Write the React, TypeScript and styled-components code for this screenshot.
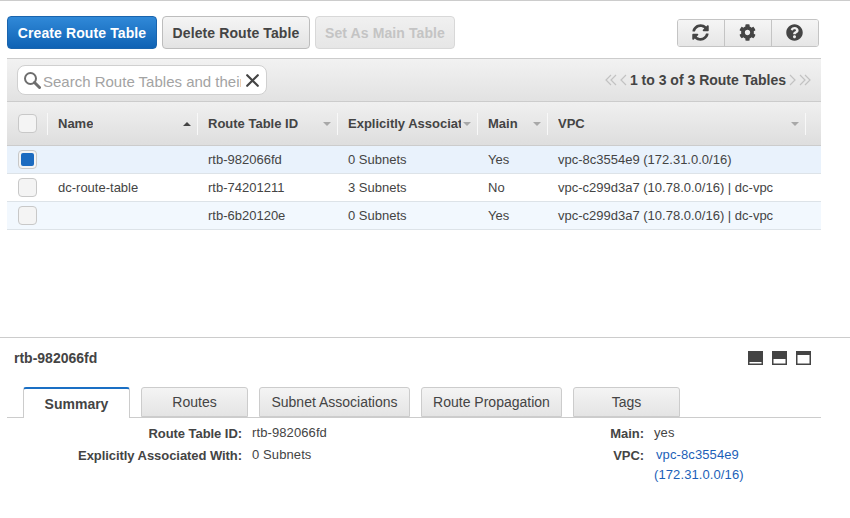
import React, { ReactElement } from "react";
import styled, { createGlobalStyle } from "styled-components";
import { FaCog, FaQuestionCircle, FaSyncAlt } from "react-icons/fa";

const GlobalStyle = createGlobalStyle`
  html, body {
    margin: 0;
    padding: 0;
    background: #fff;
  }
  body {
    font-family: "Liberation Sans", Arial, sans-serif;
    color: #444;
  }
`;

const COLUMNS = "40px 150px 140px 140px 70px 258px 16px";

const PageStyled = styled.div`
  width: 850px;
  height: 518px;
  overflow: hidden;
  border-top: 1px solid #ccc;
  box-sizing: border-box;
`;

const ListPaneStyled = styled.section`
  height: 336px;
  padding: 15px 29px 0 7px;
  box-sizing: border-box;
`;

const ActionBarStyled = styled.div`
  display: flex;
  align-items: center;
  gap: 5px;
  height: 33px;
  margin-bottom: 9px;
`;

const ActionButton = styled.button<{ $variant?: "primary" | "disabled" }>`
  height: 33px;
  padding: 0;
  width: ${(p) => (p.$variant === "primary" ? 150 : p.$variant === "disabled" ? 140 : 148)}px;
  border-radius: 4px;
  font: bold 14px "Liberation Sans", Arial, sans-serif;
  letter-spacing: 0.1px;
  border: 1px solid ${(p) => (p.$variant === "primary" ? "#1a64ad" : p.$variant === "disabled" ? "#d8d8d8" : "#bdbdbd")};
  color: ${(p) => (p.$variant === "primary" ? "#fff" : p.$variant === "disabled" ? "#c4c4c4" : "#444")};
  background: ${(p) =>
    p.$variant === "primary"
      ? "linear-gradient(#3089d8, #0f62b4)"
      : p.$variant === "disabled"
        ? "linear-gradient(#f0f0f0, #e6e6e6)"
        : "linear-gradient(#f5f5f5, #e3e3e3)"};
`;

const IconGroupStyled = styled.div`
  display: flex;
  width: 142px;
  margin-left: auto;
  margin-right: 2px;
  height: 28px;
  border: 1px solid #c4c4c4;
  border-radius: 3px;
  overflow: hidden;
  box-sizing: border-box;
`;

const IconButton = styled.button`
  flex: 1;
  padding: 0 2px 0 0;
  border: 0;
  border-left: 1px solid #c4c4c4;
  background: linear-gradient(#f5f5f5, #e6e6e6);
  color: #444;
  display: flex;
  align-items: center;
  justify-content: center;
  font-size: 17px;

  &:first-child {
    border-left: 0;
  }
`;

const ToolbarStyled = styled.div`
  display: flex;
  align-items: center;
  justify-content: space-between;
  height: 44px;
  padding: 0 10px;
  box-sizing: border-box;
  border-top: 1px solid #ccc;
  border-bottom: 1px solid #ccc;
  background: linear-gradient(#f2f2f2, #e2e2e2);
`;

const SearchBoxStyled = styled.div`
  display: flex;
  align-items: center;
  width: 250px;
  height: 30px;
  padding: 0 7px 0 5px;
  box-sizing: border-box;
  background: #fff;
  border: 1px solid #d0d0d0;
  border-radius: 8px;
`;

const SearchInput = styled.input`
  flex: 1;
  min-width: 0;
  margin: 0 5px 0 2px;
  padding: 2px 0 0;
  border: 0;
  outline: none;
  font: 15px "Liberation Sans", Arial, sans-serif;

  &::placeholder {
    color: #a3a3a3;
    opacity: 1;
  }
`;

const PagerStyled = styled.div`
  display: flex;
  align-items: center;
  gap: 3px;
  font-size: 14px;
  font-weight: bold;
  color: #444;
`;

const HeaderRowStyled = styled.div`
  display: grid;
  grid-template-columns: ${COLUMNS};
  align-items: center;
  height: 44px;
  border-bottom: 1px solid #ccc;
  background: linear-gradient(#f0f0f0, #dedede);
  box-sizing: border-box;
`;

const HeaderCell = styled.div`
  display: flex;
  align-items: center;
  justify-content: space-between;
  height: 22px;
  padding: 0 6px 0 10px;
  box-sizing: border-box;
  border-left: 1px solid #f8f8f8;
  font-size: 13px;
  font-weight: bold;
  color: #444;
  white-space: nowrap;
  overflow: hidden;
`;

const HeaderLabel = styled.span`
  overflow: hidden;
  flex: 0 1 auto;
`;

const Caret = styled.span<{ $up?: boolean }>`
  flex: none;
  width: 0;
  height: 0;
  margin-left: 2px;
  border-left: 4px solid transparent;
  border-right: 4px solid transparent;
  ${(p) => (p.$up ? "border-bottom: 4px solid #444;" : "border-top: 4px solid #a8a8a8;")}
`;

const CheckCell = styled.div`
  display: flex;
  align-items: center;
  padding-left: 11px;
`;

const CheckBox = styled.span<{ $checked?: boolean }>`
  display: flex;
  align-items: center;
  justify-content: center;
  width: 19px;
  height: 19px;
  box-sizing: border-box;
  border: 1px solid #c8c8c8;
  border-radius: 4px;
  background: #f4f4f4;

  &::after {
    content: "";
    display: ${(p) => (p.$checked ? "block" : "none")};
    width: 13px;
    height: 13px;
    border-radius: 2px;
    background: #1c6bc0;
  }
`;

const BodyRow = styled.div<{ $tint?: "selected" | "odd" }>`
  display: grid;
  grid-template-columns: ${COLUMNS};
  align-items: center;
  height: 28px;
  box-sizing: border-box;
  border-bottom: 1px solid #dde3e8;
  background: ${(p) => (p.$tint === "selected" ? "#e9f2fc" : p.$tint === "odd" ? "#f2f8fe" : "#fff")};
`;

const BodyCell = styled.div`
  padding-left: 11px;
  font-size: 13px;
  color: #444;
  white-space: nowrap;
`;

const DetailPaneStyled = styled.section`
  border-top: 1px solid #ccc;
`;

const DetailHeadStyled = styled.div`
  display: flex;
  align-items: center;
  justify-content: space-between;
  height: 40px;
  padding: 0 39px 0 14px;
`;

const DetailTitle = styled.h2`
  margin: 0;
  font-size: 14px;
  font-weight: bold;
  color: #444;
`;

const PaneIcons = styled.div`
  display: flex;
  gap: 9px;
`;

const TabBarStyled = styled.div`
  display: flex;
  gap: 11px;
  width: 814px;
  height: 31px;
  margin: 9px 0 0 7px;
  padding-left: 16px;
  box-sizing: border-box;
  border-bottom: 1px solid #ccc;
`;

const Tab = styled.div<{ $active?: boolean; $width: number }>`
  display: flex;
  justify-content: center;
  width: ${(p) => p.$width}px;
  box-sizing: border-box;
  border: 1px solid #ccc;
  border-radius: 3px 3px 0 0;
  font-size: 14px;
  color: #444;
  ${(p) =>
    p.$active
      ? `height: 31px;
         padding-top: 7px;
         font-weight: bold;
         background: #fff;
         border-top: 2px solid #1a6fc4;
         border-bottom: 0;`
      : `height: 30px;
         padding-top: 6px;
         background: linear-gradient(#f4f4f4, #e4e4e4);`}
`;

const SummaryStyled = styled.div`
  display: flex;
  padding-top: 8px;
`;

const SummaryGroup = styled.dl<{ $width: number; $labelWidth: number }>`
  display: grid;
  grid-template-columns: ${(p) => p.$labelWidth}px 1fr;
  column-gap: 10px;
  row-gap: 7px;
  align-content: start;
  width: ${(p) => p.$width}px;
  margin: 0;
  font-size: 13px;
  line-height: 15px;
`;

const SummaryLabel = styled.dt`
  font-weight: bold;
  text-align: right;
  letter-spacing: -0.06px;
  color: #444;
`;

const SummaryValue = styled.dd`
  margin: -1px 0 0;
  letter-spacing: 0.1px;
  color: #444;
`;

const VpcLink = styled.a`
  display: block;
  width: 100px;
  line-height: 20px;
  margin-top: -2px;
  color: #1c5fb8;
  text-decoration: none;
`;

const VpcId = styled.span`
  display: block;
  padding-left: 2px;
`;

const routeTables = [
  { name: "", id: "rtb-982066fd", assoc: "0 Subnets", main: "Yes", vpc: "vpc-8c3554e9 (172.31.0.0/16)", tint: "selected" as const, checked: true },
  { name: "dc-route-table", id: "rtb-74201211", assoc: "3 Subnets", main: "No", vpc: "vpc-c299d3a7 (10.78.0.0/16) | dc-vpc" },
  { name: "", id: "rtb-6b20120e", assoc: "0 Subnets", main: "Yes", vpc: "vpc-c299d3a7 (10.78.0.0/16) | dc-vpc", tint: "odd" as const },
];

const tabs = [
  { label: "Summary", width: 107, active: true },
  { label: "Routes", width: 107 },
  { label: "Subnet Associations", width: 151 },
  { label: "Route Propagation", width: 141 },
  { label: "Tags", width: 107 },
];

const SearchIcon = (): ReactElement => (
  <svg width="18" height="18" viewBox="0 0 18 18" fill="none" stroke="#6e6e6e">
    <circle cx="7.5" cy="7.5" r="5.5" strokeWidth="2" />
    <path d="M11.5 11.5 L16.5 16.5" strokeWidth="3" strokeLinecap="round" />
  </svg>
);

const ClearIcon = (): ReactElement => (
  <svg width="13" height="13" viewBox="0 0 13 13" stroke="#444" strokeWidth="2.2" strokeLinecap="round">
    <path d="M1.2 1.2 L11.8 11.8 M11.8 1.2 L1.2 11.8" />
  </svg>
);

const PagerArrow = ({ d, width }: { d: string; width: number }): ReactElement => (
  <svg width={width} height="12" viewBox={`0 0 ${width} 12`} fill="none" stroke="#c2c2c2" strokeWidth="1.2">
    <path d={d} />
  </svg>
);

const PaneIcon = ({ top, height }: { top: number; height: number }): ReactElement => (
  <svg width="15" height="14" viewBox="0 0 15 14">
    <rect width="15" height="14" fill="#444" />
    <rect x="1.5" y={top} width="12" height={height} fill="#fff" />
  </svg>
);

const App = (): ReactElement => (
  <PageStyled>
    <GlobalStyle />
    <ListPaneStyled>
      <ActionBarStyled>
        <ActionButton $variant="primary">Create Route Table</ActionButton>
        <ActionButton>Delete Route Table</ActionButton>
        <ActionButton $variant="disabled">Set As Main Table</ActionButton>
        <IconGroupStyled>
          <IconButton><FaSyncAlt /></IconButton>
          <IconButton><FaCog /></IconButton>
          <IconButton><FaQuestionCircle /></IconButton>
        </IconGroupStyled>
      </ActionBarStyled>
      <ToolbarStyled>
        <SearchBoxStyled>
          <SearchIcon />
          <SearchInput placeholder="Search Route Tables and their" />
          <ClearIcon />
        </SearchBoxStyled>
        <PagerStyled>
          <PagerArrow width={12} d="M6 1 L1 6 L6 11 M11 1 L6 6 L11 11" />
          <PagerArrow width={7} d="M6 1 L1 6 L6 11" />
          <span>1 to 3 of 3 Route Tables</span>
          <PagerArrow width={7} d="M1 1 L6 6 L1 11" />
          <PagerArrow width={12} d="M1 1 L6 6 L1 11 M6 1 L11 6 L6 11" />
        </PagerStyled>
      </ToolbarStyled>
      <HeaderRowStyled>
        <CheckCell><CheckBox /></CheckCell>
        <HeaderCell><HeaderLabel>Name</HeaderLabel><Caret $up /></HeaderCell>
        <HeaderCell><HeaderLabel>Route Table ID</HeaderLabel><Caret /></HeaderCell>
        <HeaderCell><HeaderLabel>Explicitly Associated With</HeaderLabel><Caret /></HeaderCell>
        <HeaderCell><HeaderLabel>Main</HeaderLabel><Caret /></HeaderCell>
        <HeaderCell><HeaderLabel>VPC</HeaderLabel><Caret /></HeaderCell>
        <HeaderCell />
      </HeaderRowStyled>
      {routeTables.map((row) => (
        <BodyRow key={row.id} $tint={row.tint}>
          <CheckCell><CheckBox $checked={row.checked} /></CheckCell>
          <BodyCell>{row.name}</BodyCell>
          <BodyCell>{row.id}</BodyCell>
          <BodyCell>{row.assoc}</BodyCell>
          <BodyCell>{row.main}</BodyCell>
          <BodyCell>{row.vpc}</BodyCell>
        </BodyRow>
      ))}
    </ListPaneStyled>
    <DetailPaneStyled>
      <DetailHeadStyled>
        <DetailTitle>rtb-982066fd</DetailTitle>
        <PaneIcons>
          <PaneIcon top={11} height={1.5} />
          <PaneIcon top={8} height={4.5} />
          <PaneIcon top={4} height={8.5} />
        </PaneIcons>
      </DetailHeadStyled>
      <TabBarStyled>
        {tabs.map((tab) => (
          <Tab key={tab.label} $active={tab.active} $width={tab.width}>{tab.label}</Tab>
        ))}
      </TabBarStyled>
      <SummaryStyled>
        <SummaryGroup $width={400} $labelWidth={242}>
          <SummaryLabel>Route Table ID:</SummaryLabel>
          <SummaryValue>rtb-982066fd</SummaryValue>
          <SummaryLabel>Explicitly Associated With:</SummaryLabel>
          <SummaryValue>0 Subnets</SummaryValue>
        </SummaryGroup>
        <SummaryGroup $width={400} $labelWidth={244}>
          <SummaryLabel>Main:</SummaryLabel>
          <SummaryValue>yes</SummaryValue>
          <SummaryLabel>VPC:</SummaryLabel>
          <SummaryValue>
            <VpcLink href="#"><VpcId>vpc-8c3554e9</VpcId>(172.31.0.0/16)</VpcLink>
          </SummaryValue>
        </SummaryGroup>
      </SummaryStyled>
    </DetailPaneStyled>
  </PageStyled>
);

export default App;
